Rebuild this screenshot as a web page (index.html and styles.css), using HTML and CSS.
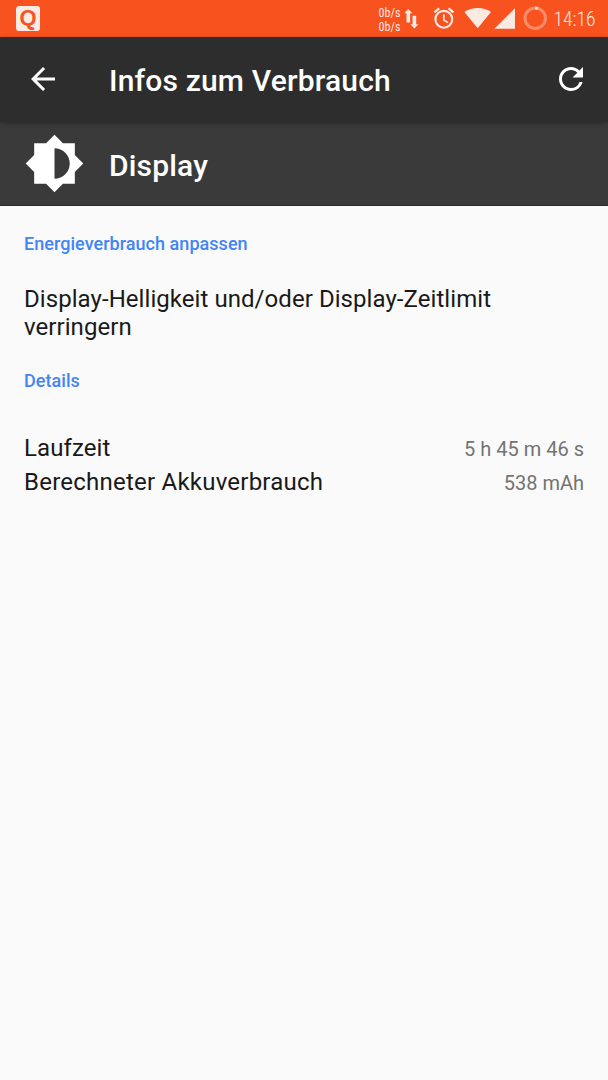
FILE: index.html
```html
<!DOCTYPE html>
<html lang="de">
<head>
<meta charset="utf-8">
<title>Infos zum Verbrauch</title>
<link rel="stylesheet" href="styles.css">
</head>
<body>
<div class="statusbar">
  <div class="badge">Q</div>
  <svg class="tray" width="238" height="37" viewBox="370 0 238 37">
    <g class="speed">
      <text x="378.5" y="17" textLength="22" lengthAdjust="spacingAndGlyphs">0b/s</text>
      <text x="378.5" y="31" textLength="22" lengthAdjust="spacingAndGlyphs">0b/s</text>
    </g>
    <path class="fill" d="M408.300 9L412.300 13.200H410.100V22.400H406.500V13.200H404.300ZM412.600 15.700H416.200V24.300H418.400L414.400 28.500L410.400 24.300H412.600Z"/>
    <g class="line">
      <circle cx="443.8" cy="19.3" r="8.4" stroke-width="2.1"/>
      <path d="M443.8 14.2V20L448 22.6" stroke-width="1.7"/>
      <path d="M434.3 12.3L439.2 8.3M448.5 8.3L453.4 12.3" stroke-width="2.2"/>
    </g>
    <path class="fill" d="M464.400 12C472 6.700 483.500 6.700 491 12L477.700 28.300Z"/>
    <path class="fill" d="M515 8.200V28.700H494.300Z"/>
    <circle class="ring" cx="535.200" cy="18.200" r="10.200"/>
    <path class="fill" d="M535.200 6.500a11.700 11.700 0 0 1 3 .4l-.8 2.900a9 9 0 0 0-2.200-.3z"/>
    <text class="clock" x="553.500" y="26" textLength="42" lengthAdjust="spacingAndGlyphs">14:16</text>
  </svg>
</div>
<header class="toolbar">
  <svg class="back" width="36" height="36" viewBox="0 0 24 24"><path d="M20 11H7.830l5.590-5.590L12 4l-8 8 8 8 1.410-1.410L7.830 13H20v-2z"/></svg>
  <h1>Infos zum Verbrauch</h1>
  <svg class="refresh" width="36" height="36" viewBox="0 0 24 24"><path d="M17.650 6.350A7.958 7.958 0 0 0 12 4c-4.420 0-7.990 3.580-7.990 8s3.570 8 7.990 8c3.730 0 6.840-2.550 7.730-6h-2.080A5.990 5.990 0 0 1 12 18c-3.310 0-6-2.690-6-6s2.690-6 6-6c1.660 0 3.140.690 4.220 1.780L13 11h7V4l-2.350 2.350z"/></svg>
</header>
<section class="entry">
  <svg width="61" height="61" viewBox="0 0 24 24"><path d="M20 15.310L23.310 12 20 8.690V4h-4.690L12 .690 8.690 4H4v4.690L.690 12 4 15.310V20h4.690L12 23.310 15.310 20H20v-4.690zM12 18V6c3.310 0 6 2.690 6 6s-2.690 6-6 6z"/></svg>
  <h2>Display</h2>
</section>
<main>
  <h3>Energieverbrauch anpassen</h3>
  <p class="hint">Display-Helligkeit und/oder Display-Zeitlimit verringern</p>
  <h3>Details</h3>
  <dl>
    <div class="row"><dt>Laufzeit</dt><dd>5 h 45 m 46 s</dd></div>
    <div class="row"><dt class="wide">Berechneter Akkuverbrauch</dt><dd>538 mAh</dd></div>
  </dl>
</main>
</body>
</html>
```
FILE: styles.css
```css
* { box-sizing: border-box; margin: 0; padding: 0; }
body {
  min-height: 1080px;
  background: #fafafa;
  color: #191919;
  font-family: Roboto, "Liberation Sans", sans-serif;
}
svg { display: block; flex: none; }
.statusbar {
  display: flex;
  justify-content: space-between;
  height: 37px;
  padding-left: 16px;
  background: #f8521e;
}
.badge {
  width: 24px;
  height: 25px;
  margin-top: 6px;
  border-radius: 3px;
  background: #fbeae6;
  color: #f8521e;
  font-family: "Liberation Sans", sans-serif;
  font-size: 22px;
  font-weight: 700;
  line-height: 23px;
  text-align: center;
}
.tray { font-family: "Roboto Condensed", Roboto, sans-serif; }
.fill, .tray text { fill: #fbe9e4; }
.speed { font-size: 13.5px; }
.clock { font-size: 20px; font-weight: 300; }
.line { fill: none; stroke: #fbe9e4; }
.ring { fill: none; stroke: #fb8c68; stroke-width: 3; }
.toolbar {
  position: relative;
  display: flex;
  align-items: center;
  height: 85px;
  padding: 0 19px 0 25px;
  background: #2d2d2d;
  box-shadow: 0 1px 4px rgba(0, 0, 0, .3);
}
.toolbar path, .entry path { fill: #fff; }
h1, h2 { color: #fff; font-size: 30px; font-weight: 500; line-height: 36px; letter-spacing: .17px; }
h1 { flex: 1; margin: 3px 0 0 48px; }
.back { margin-bottom: 1px; }
.refresh { margin-bottom: 1px; }
.entry {
  display: flex;
  align-items: center;
  gap: 24px;
  height: 84px;
  padding: 0 24px;
  background: #3a3a3a;
  border-bottom: 1px solid #292929;
}
h2 { margin-top: 4px; }
main { padding: 27px 24px 0; }
h3 { color: #4285f4; font-size: 18px; font-weight: 500; line-height: 22px; letter-spacing: .04px; }
.hint { margin: 30px 0 29px; font-size: 24px; line-height: 28px; letter-spacing: .06px; }
dl { margin-top: 39px; }
.row {
  display: flex;
  justify-content: space-between;
  align-items: baseline;
  height: 34px;
  line-height: 34px;
}
dt { font-size: 24px; letter-spacing: .1px; }
.wide { letter-spacing: .23px; }
dd { color: #737373; font-size: 20px; }
```
